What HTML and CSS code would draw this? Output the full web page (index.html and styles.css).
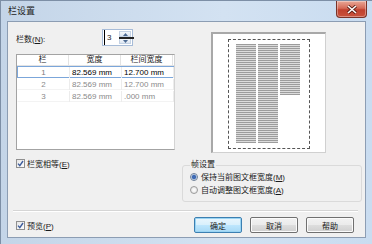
FILE: index.html
```html
<!doctype html>
<html lang="zh-CN">
<head>
	<meta charset="UTF-8">
	<title>栏设置</title>
	<link rel="stylesheet" href="styles.css">
</head>
<body>
	<div class="window">
		<div class="titlebar">
			<span class="title">栏设置</span>
			<span class="close">
				<svg width="12" height="9" viewBox="0 0 12 9"><path d="M2 1 L10 8 M10 1 L2 8" stroke="#5a1d14" stroke-width="3.2"/><path d="M2 1 L10 8 M10 1 L2 8" stroke="#fff" stroke-width="1.6"/></svg>
			</span>
		</div>
		<div class="client">
			<div class="top">
				<div class="left">
					<div class="count_row">
						<span class="count_label">栏数(<u>N</u>):</span>
						<div class="spinner">
							<span class="spin_value">3</span>
							<span class="spin_btns">
								<span class="spin_btn"><svg width="5" height="3" viewBox="0 0 5 3"><path d="M0 3 L2.5 0 L5 3Z" fill="#4c6a93"/></svg></span>
								<span class="spin_btn"><svg width="5" height="3" viewBox="0 0 5 3"><path d="M0 0 L2.5 3 L5 0Z" fill="#4c6a93"/></svg></span>
							</span>
							<span class="spin_bar"></span>
						</div>
					</div>
					<div class="grid">
						<div class="grid_head"><span>栏</span><span>宽度</span><span>栏间宽度</span></div>
						<div class="grid_row current"><span class="num">1</span><span>82.569 mm</span><span>12.700 mm</span></div>
						<div class="grid_row"><span class="num">2</span><span>82.569 mm</span><span>12.700 mm</span></div>
						<div class="grid_row"><span class="num">3</span><span>82.569 mm</span><span>.000 mm</span></div>
					</div>
					<div class="check">
						<span class="box"><svg width="7" height="7" viewBox="0 0 7 7"><path d="M1 3.6 L2.8 5.6 L6 1" fill="none" stroke="#3d5c9c" stroke-width="1.4"/></svg></span>
						<span>栏宽相等(<u>E</u>)</span>
					</div>
				</div>
				<div class="right">
					<div class="preview">
						<div class="page">
							<div class="col long"></div>
							<div class="col long"></div>
							<div class="col short"></div>
						</div>
					</div>
					<fieldset class="group">
						<legend>帧设置</legend>
						<div class="radio_row"><span class="radio on"></span><span>保持当前图文框宽度(<u>M</u>)</span></div>
						<div class="radio_row"><span class="radio"></span><span>自动调整图文框宽度(<u>A</u>)</span></div>
					</fieldset>
				</div>
			</div>
			<div class="sep"></div>
			<div class="bottom">
				<div class="check">
					<span class="box"><svg width="7" height="7" viewBox="0 0 7 7"><path d="M1 3.6 L2.8 5.6 L6 1" fill="none" stroke="#3d5c9c" stroke-width="1.4"/></svg></span>
					<span>预览(<u>P</u>)</span>
				</div>
				<div class="buttons">
					<span class="btn default">确定</span>
					<span class="btn">取消</span>
					<span class="btn">帮助</span>
				</div>
			</div>
		</div>
	</div>
</body>
</html>
```

FILE: styles.css
```css
*{
	margin: 0;
	padding: 0;
	box-sizing: border-box;
}
body{
	background: #fff;
	font-family: "Liberation Sans", "Noto Sans CJK SC", sans-serif;
	font-size: 8px;
	color: #1a1a1a;
}
u{
	text-decoration: underline;
}
.window{
	width: 372px;
	height: 244px;
	display: flex;
	flex-direction: column;
	background: linear-gradient(to right, #c4d5e8, #d3e2f2 60%, #c9dcf0);
	border: 1px solid #7d8fa6;
	border-right: none;
	border-bottom: none;
}
.titlebar{
	height: 20px;
	display: flex;
	align-items: flex-start;
	justify-content: space-between;
	padding-right: 5px;
}
.title{
	font-family: "Noto Sans CJK SC", sans-serif;
	font-size: 9px;
	line-height: 10px;
	color: #222;
	margin: 5px 0 0 7px;
}
.close{
	width: 31px;
	height: 17px;
	display: flex;
	align-items: center;
	justify-content: center;
	border: 1px solid #7a3328;
	border-top: none;
	border-radius: 0 0 4px 4px;
	background: linear-gradient(#e9a897, #d56b58 45%, #c0412e 55%, #c9523c);
	box-shadow: inset 0 0 0 1px rgba(255,255,255,0.35);
}
.client{
	height: 217px;
	margin: 0 6px 0 6px;
	background: #f0f0f0;
	border: 1px solid #8c9db3;
	padding: 7px 2px 0 8px;
	display: flex;
	flex-direction: column;
}
.top{
	display: flex;
	gap: 7px;
}
.left{
	width: 159px;
	display: flex;
	flex-direction: column;
}
.count_row{
	height: 17px;
	display: flex;
	align-items: center;
}
.count_label{
	width: 86px;
	padding-top: 1px;
}
.spinner{
	position: relative;
	width: 31px;
	height: 17px;
	display: flex;
	border: 1px solid #a7bcd8;
	background: #fff;
}
.spin_value{
	flex: 1;
	padding-left: 2px;
	line-height: 15px;
	border-left: 1px solid #000;
	margin-left: 1px;
}
.spin_btns{
	width: 13px;
	display: flex;
	flex-direction: column;
	gap: 1px;
	padding: 1px 1px 1px 0;
}
.spin_btn{
	flex: 1;
	display: flex;
	align-items: center;
	justify-content: center;
	background: linear-gradient(#f4f7fb, #dde6f1);
	border: 1px solid #c4d2e4;
}
.spin_bar{
	position: absolute;
	left: 16px;
	right: -2px;
	top: 7px;
	height: 2px;
	background: #222;
}
.grid{
	margin-top: 8px;
	height: 96px;
	background: #fff;
	border: 1px solid #a3a3a3;
	border-right-color: #d4d4d4;
}
.grid_head, .grid_row{
	display: grid;
	grid-template-columns: 52px 52px 52px;
}
.grid_head{
	height: 11px;
	line-height: 10px;
	border-bottom: 1px solid #e3e3e3;
}
.grid_head span{
	text-align: center;
	border-right: 1px solid #e3e3e3;
}
.grid_row{
	height: 12px;
	line-height: 11px;
	color: #8a8a8a;
	border: 1px solid transparent;
	border-bottom-color: #f3f3f3;
}
.grid_row span{
	padding-left: 2px;
	border-right: 1px solid #ececec;
}
.grid_row .num{
	text-align: center;
	padding-left: 0;
}
.grid_row.current{
	color: #000;
	border-color: #7ba6da;
}
.grid_row.current .num{
	color: #7a7a7a;
}
.check{
	display: flex;
	align-items: center;
	gap: 2px;
	margin-top: 8px;
	height: 10px;
}
.box{
	width: 9px;
	height: 9px;
	display: flex;
	align-items: center;
	justify-content: center;
	border: 1px solid #8f8f8f;
	background: linear-gradient(135deg, #e6e6e6, #fdfdfd);
}
.right{
	width: 180px;
	display: flex;
	flex-direction: column;
}
.preview{
	margin: 3px 0 0 29px;
	width: 115px;
	height: 121px;
	background: #fff;
	border: 2px solid #a8a8a8;
	border-right-width: 1px;
	border-bottom-width: 1px;
	border-right-color: #d0d0d0;
	border-bottom-color: #d0d0d0;
	padding: 5px 0 0 15px;
}
.page{
	width: 82px;
	height: 110px;
	border: 1px dashed #555;
	display: flex;
	align-items: flex-start;
	gap: 2px;
	padding: 4px 0 0 7px;
}
.col{
	width: 20px;
	background: repeating-linear-gradient(#9c9c9c 0 1px, #dcdcdc 1px 2px);
}
.col.long{
	height: 99px;
}
.col.short{
	height: 51px;
}
.group{
	margin-top: 7px;
	height: 42px;
	border: 1px solid #dadada;
	border-radius: 3px;
	padding: 0 0 0 7px;
	display: flex;
	flex-direction: column;
}
.group legend{
	padding: 0 1px;
	line-height: 10px;
}
.radio_row{
	display: flex;
	align-items: center;
	gap: 3px;
	height: 13px;
}
.radio{
	width: 8px;
	height: 8px;
	border-radius: 50%;
	border: 1px solid #9a9a9a;
	background: radial-gradient(#fff, #dedede);
}
.radio.on{
	background: radial-gradient(#3f6ab3 0 1.8px, #8fb0dc 2.3px, #f2f2f2 3px);
	border-color: #6d7f98;
}
.sep{
	margin: 8px 5px 0 -3px;
	height: 2px;
	border-top: 1px solid #d5d5d5;
	border-bottom: 1px solid #fff;
}
.bottom{
	display: flex;
	align-items: center;
	justify-content: space-between;
	padding: 5px 9px 0 0;
}
.bottom .check{
	margin-top: 0;
}
.buttons{
	display: flex;
	gap: 8px;
}
.btn{
	width: 48px;
	height: 16px;
	display: flex;
	align-items: center;
	justify-content: center;
	font-family: "Noto Sans CJK SC", sans-serif;
	border: 1px solid #707070;
	border-radius: 2px;
	background: linear-gradient(#f2f2f2, #ebebeb 48%, #dddddd 52%, #cfcfcf);
	box-shadow: inset 0 0 0 1px #fbfbfb;
}
.btn.default{
	border-color: #3c7fb1;
	background: linear-gradient(#eaf6fd, #d9f0fc 48%, #bee6fd 52%, #a7d9f5);
	box-shadow: inset 0 0 0 1px #9ad4f3;
}
```
